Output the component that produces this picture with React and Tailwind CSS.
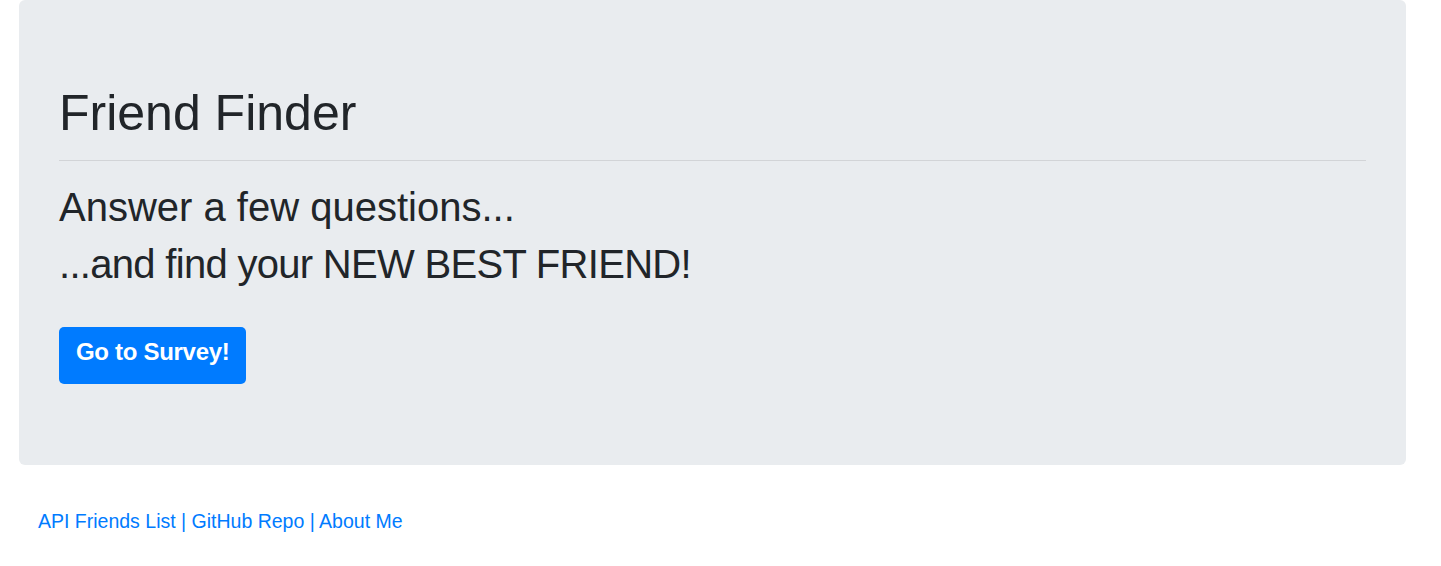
export default function App() {
  return (
    <div className="min-h-screen bg-white font-['Liberation_Sans',Arial,sans-serif] text-[#212529]">
      <div className="ml-[19px] mr-[35px] rounded-[6px] bg-[#e9ecef] px-[40px] pt-[83px] pb-[81px]">
        <h1 className="mb-[17px] text-[50px] leading-[60px] font-normal">Friend Finder</h1>
        <hr className="border-0 border-t border-[#d2d4d7]" />
        <h2 className="mt-[22px] text-[40px] leading-[48px] font-normal">Answer a few questions...</h2>
        <h2 className="mt-[9px] text-[40px] leading-[48px] font-normal tracking-[-0.7px]">...and find your NEW BEST FRIEND!</h2>
        <div className="mt-[39px]">
          <a
            href="#survey"
            className="inline-block h-[57px] rounded-[5px] bg-[#007bff] px-[17px] pt-[13px] text-[24px] leading-[24px] font-bold tracking-[-0.3px] text-white"
          >
            Go to Survey!
          </a>
        </div>
      </div>
      <footer className="ml-[38px] mt-[41px] text-[19.5px] leading-[30px] text-[#007bff]">
        <a href="#api">API Friends List</a> | <a href="#github">GitHub Repo</a> | <a href="#about">About Me</a>
      </footer>
    </div>
  );
}
